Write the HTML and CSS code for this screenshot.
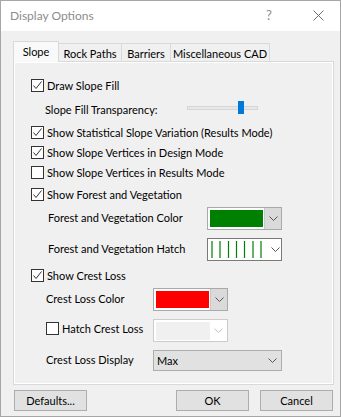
FILE: index.html
```html
<!DOCTYPE html>
<html>
<head>
<meta charset="utf-8">
<link rel="stylesheet" href="styles.css">
</head>
<body>
<div class="dialog">
  <div class="titlebar">
    <span class="title">Display Options</span>
    <span class="help">?</span>
    <span class="close"><svg width="11" height="11" viewBox="0 0 11 11"><path d="M0.5 0.5L10.5 10.5M10.5 0.5L0.5 10.5" stroke="#6e6e6e" stroke-width="1" fill="none"/></svg></span>
  </div>
  <div class="content">
    <div class="tabs">
      <div class="tab active t1">Slope</div>
      <div class="tab t2">Rock Paths</div>
      <div class="tab t3">Barriers</div>
      <div class="tab t4">Miscellaneous CAD</div>
    </div>
    <div class="panel">
      <div class="row r1">
        <span class="cb checked"><svg width="11" height="11" viewBox="0 0 11 11"><path d="M1.5 5.5L4 8.5L9.5 1.5" stroke="#333" stroke-width="1" fill="none"/></svg></span>
        <span class="lbl">Draw Slope Fill</span>
      </div>
      <div class="row r2 sub-slider">
        <span class="lbl slider-lbl">Slope Fill Transparency:</span>
        <span class="slider"><span class="track"><span class="thumb"></span></span></span>
      </div>
      <div class="row r3">
        <span class="cb checked"><svg width="11" height="11" viewBox="0 0 11 11"><path d="M1.5 5.5L4 8.5L9.5 1.5" stroke="#333" stroke-width="1" fill="none"/></svg></span>
        <span class="lbl">Show Statistical Slope Variation (Results Mode)</span>
      </div>
      <div class="row r4">
        <span class="cb checked"><svg width="11" height="11" viewBox="0 0 11 11"><path d="M1.5 5.5L4 8.5L9.5 1.5" stroke="#333" stroke-width="1" fill="none"/></svg></span>
        <span class="lbl">Show Slope Vertices in Design Mode</span>
      </div>
      <div class="row r5">
        <span class="cb"></span>
        <span class="lbl">Show Slope Vertices in Results Mode</span>
      </div>
      <div class="row r6">
        <span class="cb checked"><svg width="11" height="11" viewBox="0 0 11 11"><path d="M1.5 5.5L4 8.5L9.5 1.5" stroke="#333" stroke-width="1" fill="none"/></svg></span>
        <span class="lbl">Show Forest and Vegetation</span>
      </div>
      <div class="row crow r7 sub-forest">
        <span class="lbl forest-lbl">Forest and Vegetation Color</span>
        <span class="combo color-combo">
          <span class="swatch green"></span>
          <span class="drop gray"><svg width="9" height="5" viewBox="0 0 9 5"><path d="M0.5 0.5L4.5 4.5L8.5 0.5" stroke="#555" stroke-width="1" fill="none"/></svg></span>
        </span>
      </div>
      <div class="row crow r8 sub-forest">
        <span class="lbl forest-lbl">Forest and Vegetation Hatch</span>
        <span class="combo hatch-combo">
          <span class="hatch"><svg width="56" height="17" viewBox="0 0 56 17"><g stroke="#008000" stroke-width="1.2"><path d="M1 0V17M9 0V17M17.5 0V17M25.5 0V17M33.5 0V17M42 0V17M50 0V17"/></g></svg></span>
          <span class="drop"><svg width="9" height="5" viewBox="0 0 9 5"><path d="M0.5 0.5L4.5 4.5L8.5 0.5" stroke="#555" stroke-width="1" fill="none"/></svg></span>
        </span>
      </div>
      <div class="row r9">
        <span class="cb checked"><svg width="11" height="11" viewBox="0 0 11 11"><path d="M1.5 5.5L4 8.5L9.5 1.5" stroke="#333" stroke-width="1" fill="none"/></svg></span>
        <span class="lbl">Show Crest Loss</span>
      </div>
      <div class="row crow r10 sub-crest">
        <span class="lbl crest-lbl">Crest Loss Color</span>
        <span class="combo color-combo">
          <span class="swatch red"></span>
          <span class="drop gray"><svg width="9" height="5" viewBox="0 0 9 5"><path d="M0.5 0.5L4.5 4.5L8.5 0.5" stroke="#555" stroke-width="1" fill="none"/></svg></span>
        </span>
      </div>
      <div class="row crow r11 sub-crest">
        <span class="crest-lbl cb-lbl">
          <span class="cb"></span>
          <span class="lbl">Hatch Crest Loss</span>
        </span>
        <span class="combo disabled-combo">
          <span class="dis-fill"></span>
          <span class="drop"><svg width="9" height="5" viewBox="0 0 9 5"><path d="M0.5 0.5L4.5 4.5L8.5 0.5" stroke="#c4c4c4" stroke-width="1" fill="none"/></svg></span>
        </span>
      </div>
      <div class="row crow r12 sub-crest">
        <span class="lbl crest-lbl">Crest Loss Display</span>
        <span class="combo select-combo">
          <span class="sel-text">Max</span>
          <span class="drop"><svg width="9" height="5" viewBox="0 0 9 5"><path d="M0.5 0.5L4.5 4.5L8.5 0.5" stroke="#555" stroke-width="1" fill="none"/></svg></span>
        </span>
      </div>
    </div>
    <div class="buttons">
      <span class="btn">Defaults...</span>
      <span class="spacer"></span>
      <span class="btn">OK</span>
      <span class="btn cancel">Cancel</span>
    </div>
  </div>
</div>
</body>
</html>
```
FILE: styles.css
```css
* { box-sizing: border-box; }
html, body { margin: 0; padding: 0; }
body {
  font-family: Lato, "Noto Sans", sans-serif;
  font-size: 11px;
  color: #000;
  background: #fff;
}
.dialog {
  width: 341px;
  height: 417px;
  border: 1px solid #a6a6a6;
  background: #f0f0f0;
  display: flex;
  flex-direction: column;
}
.titlebar {
  height: 30px;
  background: #fff;
  display: flex;
  align-items: center;
  padding-left: 9px;
  flex: none;
}
.title {
  color: #8c8c8c;
  font-size: 12px;
  flex: 1;
  margin-top: -1px;
}
.help {
  color: #8c8c8c;
  font-size: 13px;
  width: 12px;
  margin-right: 35px;
  margin-top: -2px;
}
.close {
  display: flex;
  width: 11px;
  margin-right: 16px;
  margin-top: -1px;
}
.content {
  padding: 10px 6px 0 12px;
  flex: 1;
  display: flex;
  flex-direction: column;
}
.tabs {
  display: flex;
  align-items: flex-end;
  height: 20px;
  padding-left: 0;
}
.tab {
  height: 18px;
  border: 1px solid #d9d9d9;
  border-bottom: none;
  margin-right: -1px;
  display: flex;
  align-items: center;
  justify-content: center;
  padding-top: 1px;
  background: #f0f0f0;
  white-space: nowrap;
  flex: none;
}
.tab.active {
  height: 21px;
  margin-bottom: -1px;
  position: relative;
  z-index: 1;
  background: #f9f9f9;
  padding-top: 0;
  padding-bottom: 1px;
}
.t1 { width: 46px; }
.t2 { width: 64px; }
.t3 { width: 50px; }
.t4 { width: 100px; }
.panel {
  width: 321px;
  height: 324px;
  border: 1px solid #d9d9d9;
  box-shadow: inset 1px 1px 0 #fff, inset -1px -1px 0 #fff;
  padding: 13px 0 0 17px;
  display: flex;
  flex-direction: column;
}
.row {
  display: flex;
  align-items: center;
  height: 20px;
  flex: none;
}
.r2 { margin-top: 5px; align-items: flex-start; }
.r3 { margin-top: 3px; height: 19px; }
.r6 { margin-top: 2px; }
.r7 { margin-top: 3px; }
.r8 { margin-top: 8px; }
.r9 { margin-top: 4px; }
.r10 { margin-top: 3px; }
.r11 { margin-top: 8px; }
.r12 { margin-top: 8px; height: 21px; }
.crow { height: 23px; }
.r12.crow { height: 21px; }
.cb {
  width: 13px;
  height: 13px;
  border: 1px solid #333;
  background: #fff;
  flex: none;
  display: flex;
  margin-right: 3px;
}
.cb svg { display: block; }
.lbl { white-space: nowrap; }
.sub-slider { padding-left: 14px; }
.slider-lbl { width: 142px; line-height: 20px; }
.slider {
  width: 71px;
  height: 13px;
  margin-top: 1px;
  display: flex;
  align-items: center;
}
.track {
  width: 71px;
  height: 4px;
  background: #e7e7e7;
  border: 1px solid #d6d6d6;
  display: flex;
  align-items: center;
}
.thumb {
  width: 6px;
  height: 13px;
  background: #0078d7;
  margin-left: 50px;
  flex: none;
}
.sub-forest { padding-left: 17px; }
.forest-lbl { width: 159px; margin-top: -2px; }
.sub-crest { padding-left: 15px; }
.crest-lbl { width: 107px; margin-top: -2px; }
.cb-lbl { display: flex; align-items: center; }
.r11 .cb-lbl { margin-top: -4px; }
.r11 .cb { margin-right: 3px; }
.combo {
  display: flex;
  height: 23px;
  width: 75px;
  border: 1px solid #a9a9a9;
  background: #fff;
  flex: none;
}
.swatch {
  width: 54px;
  height: 17px;
  margin: 2px 1px 2px 2px;
}
.green { background: #008000; }
.red { background: #ff0000; }
.drop {
  width: 17px;
  display: flex;
  align-items: center;
  justify-content: center;
  margin-left: auto;
  flex: none;
}
.drop.gray { background: #dadada; border-left: 1px solid #c8c8c8; }
.hatch-combo { border-color: #7a7a7a; }
.hatch { display: flex; padding: 2px 0 0 3px; }
.hatch svg { display: block; }
.disabled-combo { border-color: #cccccc; }
.dis-fill {
  width: 54px;
  margin: 2px 0 1px 2px;
  background: #f0f0f0;
}
.select-combo {
  width: 129px;
  height: 21px;
  background: #e1e1e1;
  border-color: #adadad;
  align-items: center;
}
.sel-text { padding-left: 3px; }
.select-combo .drop { height: 100%; }
.buttons {
  display: flex;
  margin-top: 5px;
  padding-left: 1px;
}
.btn {
  width: 73px;
  height: 21px;
  background: #e1e1e1;
  border: 1px solid #adadad;
  display: flex;
  align-items: center;
  justify-content: center;
}
.spacer { flex: none; width: 89px; }
.cancel { margin-left: 11px; }
```
